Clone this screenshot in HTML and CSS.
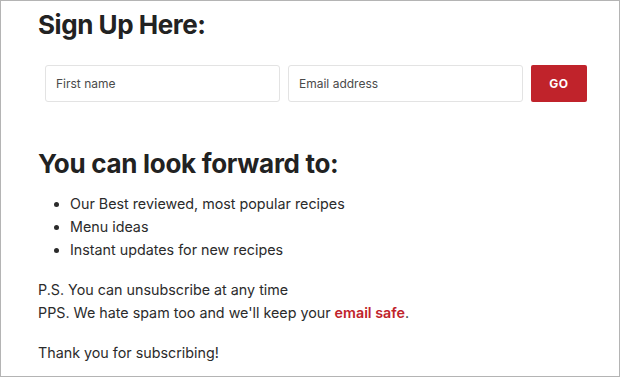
FILE: index.html
```html
<!DOCTYPE html>
<html lang="en">
<head>
  <meta charset="UTF-8">
  <meta name="viewport" content="width=device-width, initial-scale=1.0">
  <title>Sign Up</title>
  <link rel="stylesheet" href="styles.css">
</head>
<body>
    <div class="frame">
        <h1>Sign Up Here:</h1>
        <form class="signup">
            <input type="text" placeholder="First name">
            <input type="email" placeholder="Email address">
            <button type="submit">GO</button>
        </form>

        <h2>You can look forward to:</h2>
        <ul>
            <li>Our Best reviewed, most popular recipes</li>
            <li>Menu ideas</li>
            <li>Instant updates for new recipes</li>
        </ul>

        <p class="ps">P.S. You can unsubscribe at any time<br>
        PPS. We hate spam too and we'll keep your <strong>email safe</strong>.</p>

        <p class="thanks">Thank you for subscribing!</p>
    </div>
</body>
</html>
```

FILE: styles.css
```css
body {
  margin: 0;
  font-family: 'Inter', 'Liberation Sans', sans-serif;
  color: #2b2b2b;
  background: #fff;
}
.frame {
  box-sizing: border-box;
  width: 620px;
  height: 377px;
  border: 1px solid #b4b4b4;
  padding: 0 0 0 37px;
  overflow: hidden;
}
h1 {
  font-size: 26px;
  font-weight: 700;
  letter-spacing: -0.45px;
  line-height: 34px;
  margin: 7px 0 0;
  color: #222;
}
.signup {
  display: flex;
  gap: 8px;
  margin: 23px 0 0 7px;
  width: 542px;
}
.signup input {
  box-sizing: border-box;
  width: 235px;
  height: 37px;
  border: 1px solid #e3e3e3;
  border-radius: 3px;
  padding: 0 10px;
  font-family: inherit;
  font-size: 12px;
  color: #333;
}
.signup input::placeholder {
  color: #4a4a4a;
}
.signup button {
  width: 56px;
  height: 37px;
  border: none;
  border-radius: 2px;
  background: #c0232b;
  color: #fff;
  font-family: inherit;
  font-size: 12px;
  font-weight: 700;
  letter-spacing: 0.5px;
}
h2 {
  font-size: 26px;
  font-weight: 700;
  letter-spacing: -0.3px;
  line-height: 32px;
  margin: 46px 0 0;
  color: #222;
}
ul {
  margin: 12px 0 0;
  padding-left: 32px;
  font-size: 14.3px;
  line-height: 23px;
}
p {
  margin: 0;
  font-size: 14.3px;
  line-height: 23px;
}
.ps {
  margin-top: 17px;
}
.ps strong {
  color: #c0232b;
  font-weight: 600;
}
.thanks {
  margin-top: 17px;
}
```
